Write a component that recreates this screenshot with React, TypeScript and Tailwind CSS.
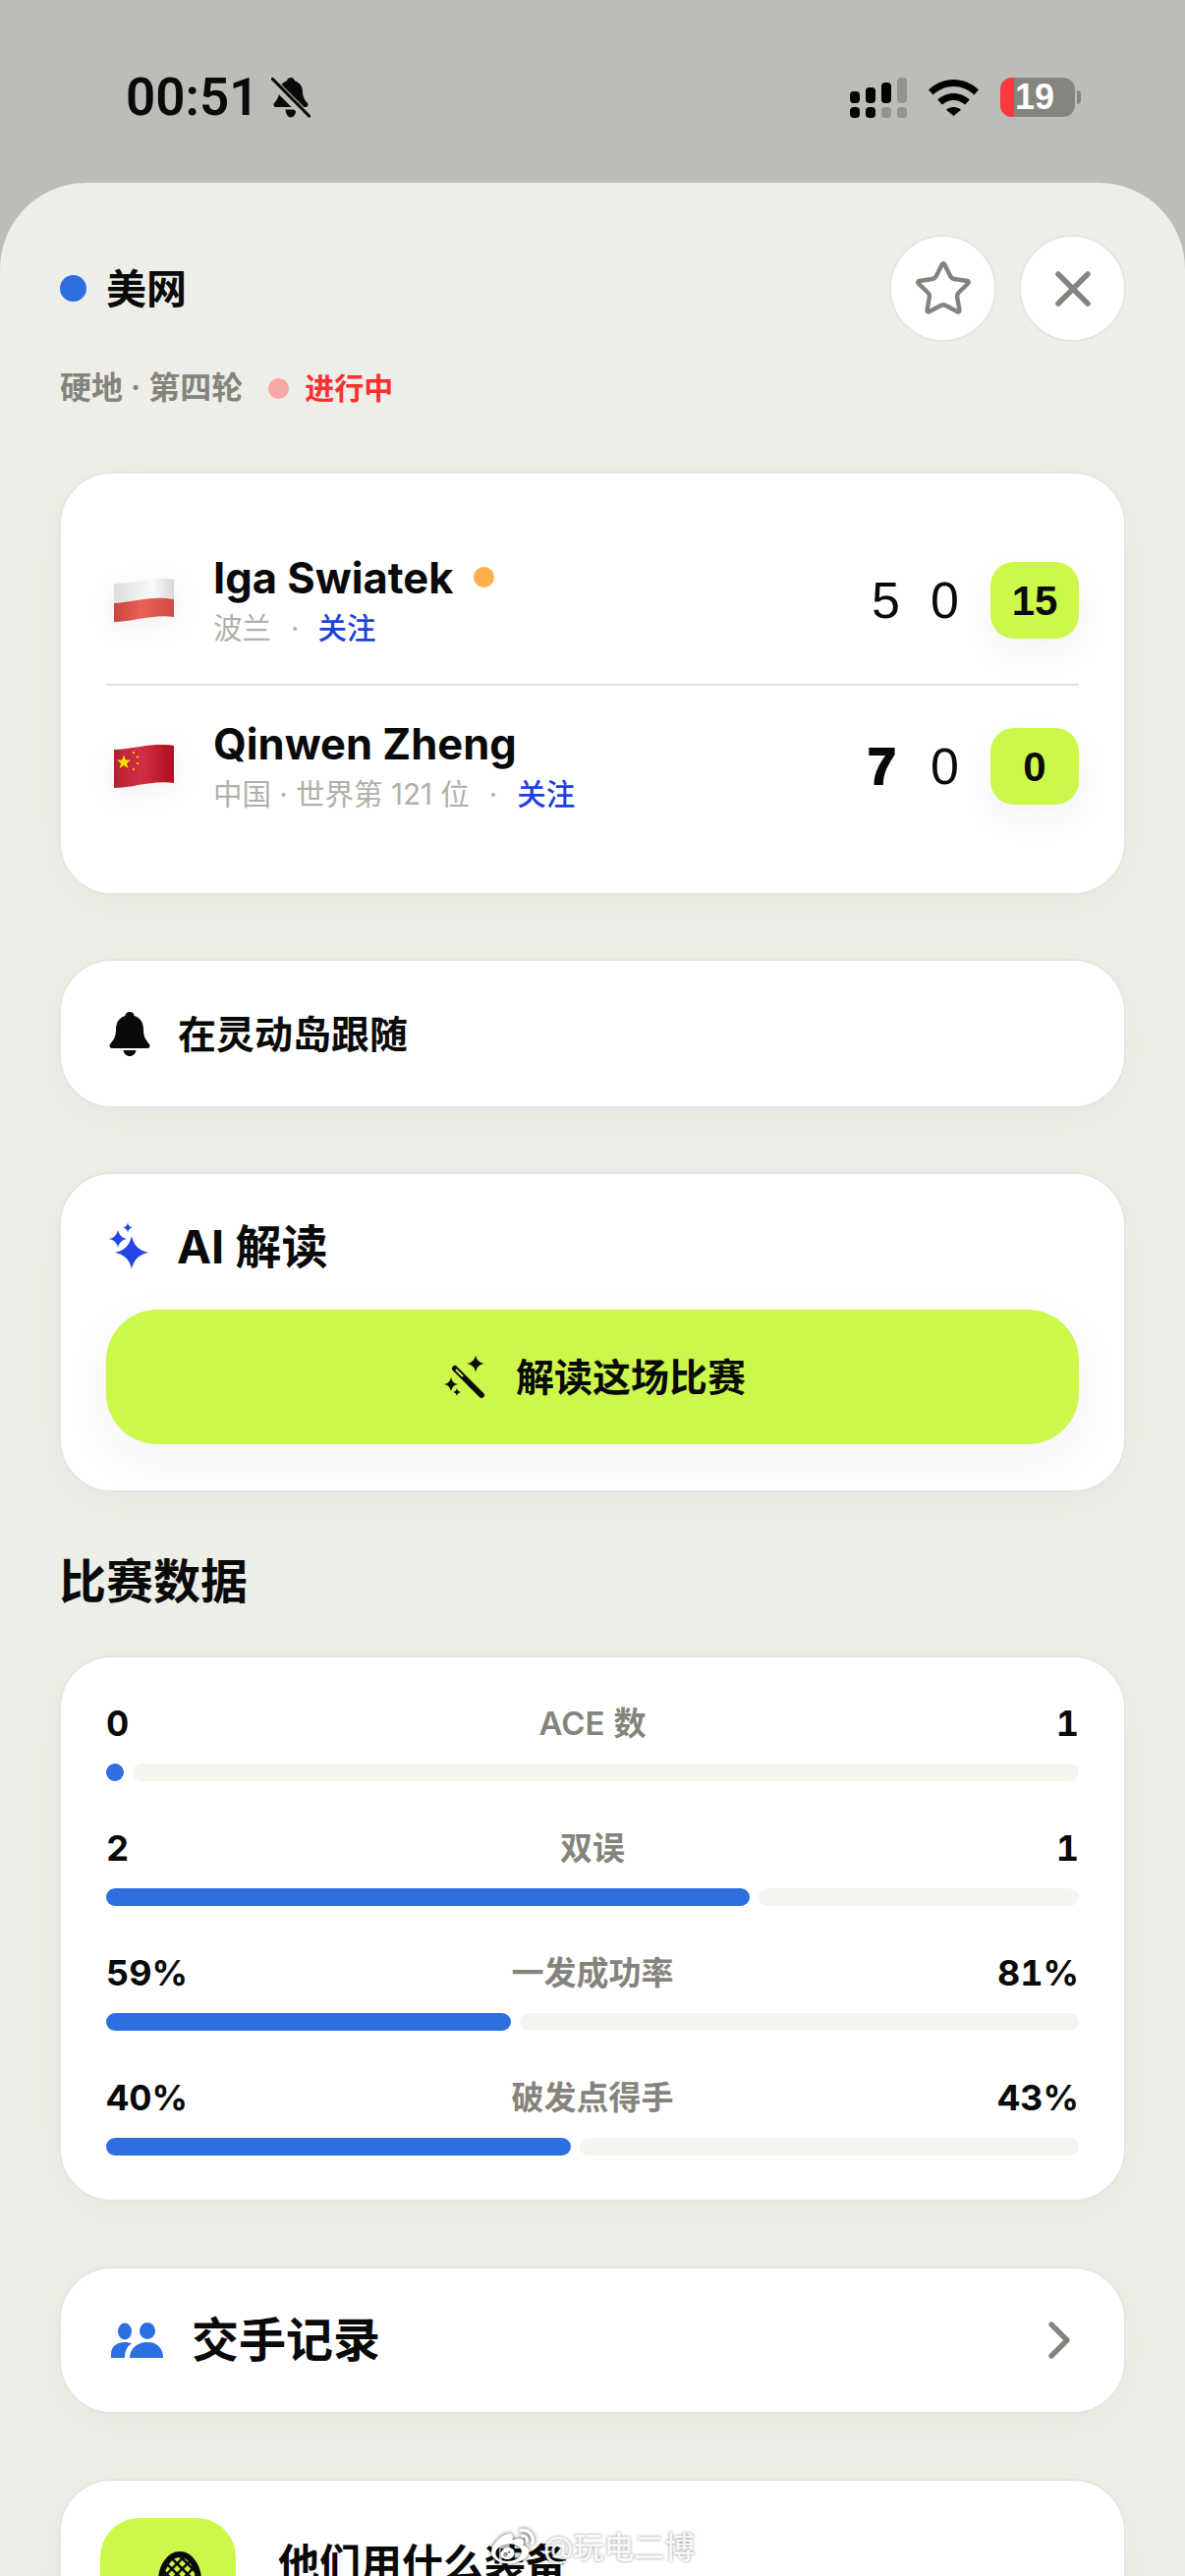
import React from "react";
import { Star, X, ChevronRight } from "lucide-react";
import { FaWeibo } from "react-icons/fa";

const Spark = ({ cx, cy, r }: { cx: number; cy: number; r: number }) => {
  const k = r * 0.16;
  return (
    <path
      d={`M${cx} ${cy - r}Q${cx + k} ${cy - k} ${cx + r} ${cy}Q${cx + k} ${cy + k} ${cx} ${cy + r}Q${cx - k} ${cy + k} ${cx - r} ${cy}Q${cx - k} ${cy - k} ${cx} ${cy - r}Z`}
    />
  );
};

const PolandFlag = () => (
  <svg viewBox="0 0 61 44" className="w-[61px] h-[44px] shrink-0 drop-shadow-[0_6px_12px_rgba(0,0,0,0.06)]">
    <defs>
      <linearGradient id="pl" x1="0" x2="1" y1="0" y2="0">
        <stop offset="0" stopColor="#c9453e" />
        <stop offset="0.45" stopColor="#ea6055" />
        <stop offset="1" stopColor="#d04a42" />
      </linearGradient>
      <linearGradient id="plw" x1="0" x2="1" y1="0" y2="0">
        <stop offset="0" stopColor="#dedede" />
        <stop offset="0.65" stopColor="#f9f9f9" />
        <stop offset="1" stopColor="#d8d8d8" />
      </linearGradient>
    </defs>
    <path d="M0 5C20 5 38 -3 61 1V21C38 17 20 24 0 25Z" fill="url(#plw)" />
    <path d="M0 25C20 24 38 17 61 21V39C38 36 20 44 0 44Z" fill="url(#pl)" />
  </svg>
);

const ChinaFlag = () => (
  <svg viewBox="0 0 61 44" className="w-[61px] h-[44px] shrink-0 drop-shadow-[0_6px_12px_rgba(0,0,0,0.06)]">
    <defs>
      <linearGradient id="cn" x1="0" x2="1" y1="0" y2="0">
        <stop offset="0" stopColor="#b91f30" />
        <stop offset="0.45" stopColor="#d13045" />
        <stop offset="1" stopColor="#ad1020" />
      </linearGradient>
    </defs>
    <path d="M0 5C20 5 38 -3 61 1V39C38 36 20 44 0 44Z" fill="url(#cn)" />
    <path d="M10 10.500l1.900 5 5.300.1-4.200 3.300 1.500 5.100-4.500-3-4.400 3 1.500-5.100-4.200-3.300 5.300-.1Z" fill="#f8e000" />
    <g fill="#f8e000">
      <circle cx="20" cy="8" r="1.100" />
      <circle cx="24" cy="12.500" r="1.100" />
      <circle cx="24" cy="19" r="1.100" />
      <circle cx="20" cy="25" r="1.100" />
    </g>
  </svg>
);

const Bell = () => (
  <svg viewBox="0 0 42 45" className="w-[42px] h-[45px] shrink-0" fill="#0a0a0a">
    <path d="M21 0c2.800 0 4.300 1.700 4.600 3.900C32 5.700 35 11 35 18c0 8 3 11 6 15 1.200 1.700.3 4-2 4H3c-2.300 0-3.200-2.300-2-4 3-4 6-7 6-15 0-7 3-12.300 9.400-14.100C16.700 1.700 18.200 0 21 0Z" />
    <path d="M14.500 39h13c-.5 3.500-3.200 6-6.500 6s-6-2.500-6.500-6Z" />
  </svg>
);

const Cell = () => (
  <svg viewBox="0 0 58 41" className="w-[58px] h-[41px]">
    <g fill="#000">
      <rect x="0" y="14" width="10" height="12" rx="4" />
      <rect x="16" y="10" width="10" height="16" rx="4" />
      <rect x="32" y="5" width="10" height="21" rx="4" />
      <rect x="0" y="30" width="10" height="11" rx="4" />
      <rect x="16" y="30" width="10" height="11" rx="4" />
    </g>
    <g fill="#94938d">
      <rect x="48" y="0" width="10" height="26" rx="4" />
      <rect x="32" y="30" width="10" height="11" rx="4" />
      <rect x="48" y="30" width="10" height="11" rx="4" />
    </g>
  </svg>
);

const Wifi = () => (
  <svg viewBox="0 0 51 37" className="w-[51px] h-[37px]" fill="#000">
    <path d="M25.500 0C35 0 44 3.800 51 10.500l-4.700 5C40.600 10.200 33.300 7 25.500 7S10.400 10.200 4.700 15.500L0 10.500C7 3.800 16 0 25.500 0Z" />
    <path d="M25.500 14c6 0 11.800 2.400 16.300 6.500l-4.700 5C34 22.800 29.900 21 25.500 21s-8.500 1.800-11.600 4.500l-4.700-5C13.700 16.400 19.500 14 25.500 14Z" />
    <path d="M25.500 28c2.900 0 5.500 1 7.500 2.700L25.500 37 18 30.700c2-1.700 4.600-2.700 7.500-2.700Z" />
  </svg>
);

const BellSlash = () => (
  <svg viewBox="0 0 40 43" className="w-[40px] h-[43px]" fill="#0a0a0a">
    <path d="M20 1c2.300 0 3.600 1.400 3.900 3.200C29 5.700 32 10 32 15.500c0 6 2.800 9 5 11.500 1.200 1.500.3 4-1.800 4H4.800c-2.100 0-3-2.500-1.800-4 2.200-2.500 5-5.500 5-11.500C8 10 11 5.700 16.100 4.200 16.400 2.400 17.700 1 20 1Z" />
    <path d="M14.500 33.500h11c-.4 4.500-2.600 8-5.500 8s-5.100-3.500-5.500-8Z" />
    <path d="M0 4 37 41" stroke="#bdbcb7" strokeWidth="9" />
    <path d="M1.500 2.500 38.500 40" stroke="#0a0a0a" strokeWidth="3.200" strokeLinecap="round" />
  </svg>
);

const People = () => (
  <svg viewBox="0 0 53 36" className="w-[53px] h-[36px] shrink-0" fill="#2e6fe0">
    <ellipse cx="14" cy="9" rx="7" ry="8.500" />
    <ellipse cx="37" cy="8.500" rx="8" ry="8.500" />
    <path d="M0 36v-4c0-7 5-12 14-12 3 0 5 .5 7 1.500C16.500 24 14 29 14 36Z" />
    <path d="M19 36c0-9 7-16 18-16s16 7 16 16Z" />
  </svg>
);

const Racket = () => (
  <svg viewBox="0 0 48 60" className="w-[48px] h-[60px] ml-[24px]">
    <defs>
      <pattern id="mesh" width="7.500" height="7.500" patternUnits="userSpaceOnUse" patternTransform="rotate(45)">
        <rect width="7.500" height="7.500" fill="#cbf84a" />
        <path d="M0 0H7.500M0 0V7.500" stroke="#0a0a0a" strokeWidth="5" />
      </pattern>
    </defs>
    <ellipse cx="24" cy="30" rx="19" ry="27" fill="url(#mesh)" stroke="#0a0a0a" strokeWidth="6" />
  </svg>
);

const Score = ({ a, b, heavy }: { a: string; b: string; heavy?: boolean }) => (
  <div className="flex items-center font-['Liberation_Sans','Arial',sans-serif] text-[52px] leading-none text-[#0a0a0a]">
    <span className={heavy ? "w-[60px] text-right pr-[20px] font-black [-webkit-text-stroke:2px_#0a0a0a]" : "w-[60px] text-right pr-[16px]"}>{a}</span>
    <span className="w-[60px] text-right pr-[16px]">{b}</span>
  </div>
);

const Badge = ({ v }: { v: string }) => (
  <div className="ml-[16px] w-[90px] h-[78px] rounded-[24px] bg-[#cbf84a] flex items-center justify-center text-[42px] font-bold text-[#0a0a0a] shadow-[0_14px_34px_rgba(0,0,0,0.05)] font-['Liberation_Sans','Arial',sans-serif]">
    {v}
  </div>
);

const stats = [
  { l: "0", c: "ACE 数", r: "1", w: "w-[18px]" },
  { l: "2", c: "双误", r: "1", w: "w-[655px]" },
  { l: "59%", c: "一发成功率", r: "81%", w: "w-[412px]" },
  { l: "40%", c: "破发点得手", r: "43%", w: "w-[473px]" },
];

const cardCls =
  "bg-white rounded-[54px] border-2 border-[#e6e6dd] shadow-[0_10px_50px_rgba(90,90,70,0.05)]";

export default function App() {
  return (
    <div className="relative w-[1206px] h-[2622px] overflow-hidden bg-[#bdbcb7] font-['Inter','Noto_Sans_CJK_SC',sans-serif] text-[#0a0a0a]">
      <div className="h-[186px] relative">
        <div className="flex items-center pl-[128px] pt-[74px]">
          <span className="text-[53px] font-semibold leading-[50px] font-['Roboto',sans-serif]">00:51</span>
          <span className="ml-[12px]"><BellSlash /></span>
          <div className="ml-auto mr-[106px] flex items-center">
            <span className="ml-[2px]"><Cell /></span>
            <span className="ml-[22px]"><Wifi /></span>
            <div className="ml-[22px] relative w-[76px] h-[40px] rounded-[12px] bg-[#85847e] overflow-hidden flex items-center justify-center">
              <div className="absolute left-0 top-0 bottom-0 w-[14px] bg-[#fb3a3f]" />
              <span className="relative text-white font-bold text-[36px] leading-none ml-[-6px] font-['Liberation_Sans','Arial',sans-serif]">19</span>
            </div>
            <div className="ml-[2px] w-[4px] h-[14px] rounded-r-[4px] bg-[#85847e]" />
          </div>
        </div>
      </div>

      <div className="h-[2436px] bg-[#eeeee8] rounded-t-[88px] px-[60px]">
        <div className="pt-[53px] flex items-center h-[162px]">
          <div className="ml-[1px] w-[27px] h-[27px] rounded-full bg-[#2e6fe0]" />
          <span className="ml-[20px] text-[41px] leading-[50px] font-bold">美网</span>
          <button className="ml-auto w-[109px] h-[109px] rounded-full bg-white border-2 border-[#e6e6dd] flex items-center justify-center">
            <Star size={62} strokeWidth={1.700} color="#85847c" />
          </button>
          <button className="ml-[23px] w-[109px] h-[109px] rounded-full bg-white border-2 border-[#e6e6dd] flex items-center justify-center">
            <X size={60} strokeWidth={2.200} color="#85847c" />
          </button>
        </div>

        <div className="mt-[25px] h-[44px] flex items-center pl-[1px]">
          <span className="text-[32px] font-semibold text-[#85847c]">硬地 · 第四轮</span>
          <span className="ml-[26px] w-[21px] h-[21px] rounded-full bg-[#f7aaa5]" />
          <span className="ml-[16px] text-[30px] font-semibold text-[#fb3030]">进行中</span>
        </div>

        <div className={`mt-[63px] ${cardCls} px-[46px] h-[431px]`}>
          <div className="pt-[90px] pb-[46px] flex items-center h-[214px]">
            <span className="ml-[8px]"><PolandFlag /></span>
            <div className="ml-[40px]">
              <div className="flex items-center h-[50px]">
                <span className="text-[43.500px] leading-[50px] font-bold">Iga Swiatek</span>
                <span className="ml-[21px] w-[21px] h-[21px] rounded-full bg-[#ffb04a]" />
              </div>
              <div className="mt-[7px] h-[40px] flex items-center text-[29.500px] text-[#b1b0a8]">
                <span>波兰</span>
                <span className="ml-[20px]">·</span>
                <span className="ml-[19px] text-[#1f3fe0] font-medium">关注</span>
              </div>
            </div>
            <div className="ml-auto flex items-center">
              <Score a="5" b="0" />
              <Badge v="15" />
            </div>
          </div>
          <div className="h-[2px] bg-[#e3e3d9]" />
          <div className="pt-[43px] pb-[90px] flex items-center h-[211px]">
            <span className="ml-[8px]"><ChinaFlag /></span>
            <div className="ml-[40px]">
              <div className="h-[50px] text-[43.500px] leading-[50px] font-bold">Qinwen Zheng</div>
              <div className="mt-[7px] h-[40px] flex items-center text-[29.500px] text-[#b1b0a8]">
                <span>中国 · 世界第 121 位</span>
                <span className="ml-[20px]">·</span>
                <span className="ml-[20px] text-[#1f3fe0] font-medium">关注</span>
              </div>
            </div>
            <div className="ml-auto flex items-center">
              <Score a="7" b="0" heavy />
              <Badge v="0" />
            </div>
          </div>
        </div>

        <div className={`mt-[65px] ${cardCls} h-[152px] pl-[49px] flex items-center`}>
          <Bell />
          <span className="ml-[28px] text-[39px] font-semibold leading-none">在灵动岛跟随</span>
        </div>

        <div className={`mt-[65px] ${cardCls} h-[326px] px-[46px] pt-[43px]`}>
          <div className="h-[60px] flex items-center pl-[3px]">
            <svg viewBox="0 0 42 48" className="w-[42px] h-[48px] shrink-0" fill="#2545e6">
              <Spark cx={23} cy={31} r={17} />
              <Spark cx={9} cy={17} r={9} />
              <Spark cx={19} cy={5.500} r={5} />
            </svg>
            <span className="ml-[27px] text-[47px] leading-none font-bold">AI 解读</span>
          </div>
          <div className="mt-[35px] pl-[5px] h-[137px] rounded-[52px] bg-[#cbf84a] flex items-center justify-center shadow-[0_16px_50px_rgba(0,0,0,0.05)]">
            <svg viewBox="0 0 42 44" className="w-[42px] h-[44px] shrink-0">
              <g fill="#0a0a0a">
                <Spark cx={32} cy={8} r={8.500} />
                <Spark cx={7} cy={29} r={7} />
                <Spark cx={13} cy={37} r={4} />
              </g>
              <path d="M11 13 38 40" stroke="#0a0a0a" strokeWidth="6" strokeLinecap="round" />
              <path d="M12 14 19 21" stroke="#cbf84a" strokeWidth="2" />
            </svg>
            <span className="ml-[31px] text-[39px] font-semibold leading-none">解读这场比赛</span>
          </div>
        </div>

        <div className="mt-[61px] h-[60px] flex items-center text-[48px] font-bold leading-none">比赛数据</div>

        <div className={`mt-[45px] ${cardCls} h-[556px] px-[46px] pt-[45px]`}>
          {stats.map((s, i) => (
            <div key={s.c} className={i ? "mt-[46px]" : ""}>
              <div className="grid grid-cols-[1fr_auto_1fr] items-center h-[44px] tabular-nums">
                <span className="text-[36px] font-bold leading-none">{s.l}</span>
                <span className="text-[33px] font-semibold leading-none text-[#85847c]">{s.c}</span>
                <span className="text-[36px] font-bold leading-none text-right">{s.r}</span>
              </div>
              <div className="mt-[19px] flex gap-[9px] h-[18px]">
                <div className={`${s.w} rounded-full bg-[#2e6fe0]`} />
                <div className="flex-1 rounded-full bg-[#f5f5f0]" />
              </div>
            </div>
          ))}
        </div>

        <div className={`mt-[66px] ${cardCls} h-[150px] pl-[51px] pr-[34px] flex items-center`}>
          <People />
          <span className="ml-[29px] text-[48px] font-bold leading-none">交手记录</span>
          <ChevronRight size={64} strokeWidth={2} color="#85847c" className="ml-auto" />
        </div>

        <div className={`mt-[66px] ${cardCls} h-[300px] pl-[40px] pt-[38px] flex items-start`}>
          <div className="w-[138px] h-[138px] rounded-[40px] bg-[#cbf84a] flex justify-center pt-[34px]">
            <Racket />
          </div>
          <span className="ml-[43px] mt-[22px] text-[42px] font-bold leading-[50px]">他们用什么装备</span>
        </div>
      </div>

      <div className="absolute left-[500px] top-[2570px] flex items-center text-[31px] font-medium text-white/90 [text-shadow:0_0_3px_rgba(0,0,0,0.45)]">
        <FaWeibo size={44} className="text-white drop-shadow-[0_0_2px_rgba(0,0,0,0.7)]" />
        <span className="ml-[9px]">@玩电二博</span>
      </div>
    </div>
  );
}
